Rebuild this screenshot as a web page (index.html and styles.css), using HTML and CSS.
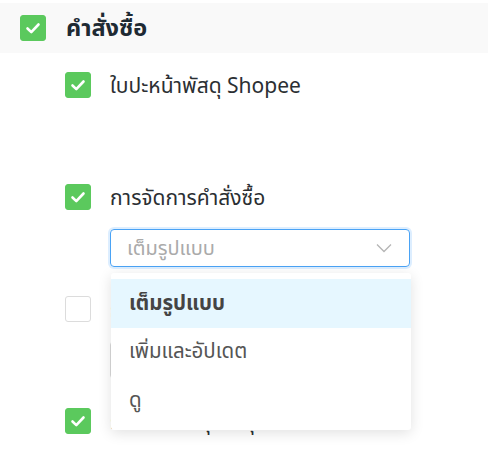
FILE: index.html
```html
<!DOCTYPE html>
<html lang="th">
<head>
<meta charset="utf-8">
<link rel="stylesheet" href="styles.css">
</head>
<body>
<div class="page">
  <div class="header">
    <span class="cb on"><svg viewBox="0 0 26 26"><path d="M7.5 13.5l3.8 3.6 7.2-7.6" /></svg></span>
    <span class="header-title">คำสั่งซื้อ</span>
  </div>
  <div class="list">
    <div class="item">
      <div class="row">
        <span class="cb on"><svg viewBox="0 0 26 26"><path d="M7.5 13.5l3.8 3.6 7.2-7.6" /></svg></span>
        <span class="label">ใบปะหน้าพัสดุ Shopee</span>
      </div>
      <div class="spacer"></div>
    </div>
    <div class="item">
      <div class="row">
        <span class="cb on"><svg viewBox="0 0 26 26"><path d="M7.5 13.5l3.8 3.6 7.2-7.6" /></svg></span>
        <span class="label">การจัดการคำสั่งซื้อ</span>
      </div>
      <div class="select focus">
        <span class="placeholder">เต็มรูปแบบ</span>
        <svg class="chev" viewBox="0 0 16 10"><path d="M1 1.5l7 7 7-7" /></svg>
      </div>
    </div>
    <div class="item">
      <div class="row">
        <span class="cb"></span>
        <span class="label">การจัดการสินค้า</span>
      </div>
      <div class="select">
        <span class="placeholder">เต็มรูปแบบ</span>
        <svg class="chev" viewBox="0 0 16 10"><path d="M1 1.5l7 7 7-7" /></svg>
      </div>
    </div>
    <div class="item last">
      <div class="row">
        <span class="cb on"><svg viewBox="0 0 26 26"><path d="M7.5 13.5l3.8 3.6 7.2-7.6" /></svg></span>
        <span class="label">การจองวัสดุบรรจุภัณฑ์</span>
      </div>
    </div>
  </div>
  <div class="dropdown">
    <div class="opt active">เต็มรูปแบบ</div>
    <div class="opt">เพิ่มและอัปเดต</div>
    <div class="opt">ดู</div>
  </div>
</div>
</body>
</html>
```
FILE: styles.css
```css
html, body {
  margin: 0;
  padding: 0;
  background: #fff;
}
body {
  font-family: "Noto Sans", "Noto Sans Thai", "Noto Sans Thai UI", sans-serif;
  color: #333;
  width: 488px;
  height: 454px;
  overflow: hidden;
}
.page {
  position: relative;
  padding-top: 3px;
  height: 451px;
  overflow: hidden;
}
.header {
  height: 50px;
  background: #f9f9f9;
  display: flex;
  align-items: center;
  padding-left: 20px;
  gap: 20px;
}
.header-title {
  font-size: 23.5px;
  font-weight: 700;
  color: #1e2a33;
  line-height: 1;
}
.cb {
  width: 26px;
  height: 26px;
  box-sizing: border-box;
  border-radius: 3px;
  border: 1px solid #dcdcdc;
  background: #fff;
  display: flex;
  align-items: center;
  justify-content: center;
  flex: none;
}
.cb.on {
  background: #5bc95d;
  border-color: #5bc95d;
}
.cb svg {
  width: 26px;
  height: 26px;
  margin: -1px;
}
.cb svg path {
  fill: none;
  stroke: #fff;
  stroke-width: 2.6;
  stroke-linecap: round;
  stroke-linejoin: round;
}
.list {
  padding-left: 65px;
  padding-top: 19px;
}
.item {
  height: 112px;
}
.item.last {
  height: 40px;
}
.row {
  display: flex;
  align-items: center;
  gap: 19px;
  height: 26px;
}
.label {
  font-size: 21px;
  color: #2b2f33;
  line-height: 1;
}
.spacer {
  height: 38px;
}
.select {
  margin-top: 19px;
  margin-left: 45px;
  width: 300px;
  height: 38px;
  box-sizing: border-box;
  border: 1px solid #d9d9d9;
  border-radius: 4px;
  display: flex;
  align-items: center;
  justify-content: space-between;
  padding: 0 17px 0 16px;
}
.select.focus {
  border-color: #4aa3f5;
  box-shadow: 0 0 0 2px rgba(64, 158, 255, 0.18);
}
.placeholder {
  font-size: 20px;
  color: #aaaaaa;
  line-height: 1;
}
.chev {
  width: 16px;
  height: 10px;
}
.chev path {
  fill: none;
  stroke: #b5b5b5;
  stroke-width: 1.3;
}
.dropdown {
  position: absolute;
  left: 111px;
  top: 273px;
  width: 300px;
  padding: 6px 0 5px;
  background: #fff;
  border-radius: 3px;
  box-shadow: 0 3px 14px rgba(0, 0, 0, 0.12);
}
.opt {
  height: 48.5px;
  display: flex;
  align-items: center;
  padding-left: 18px;
  font-size: 20.5px;
  color: #555;
}
.opt.active {
  background: #e6f7ff;
  font-weight: 700;
  color: #444;
}
```
